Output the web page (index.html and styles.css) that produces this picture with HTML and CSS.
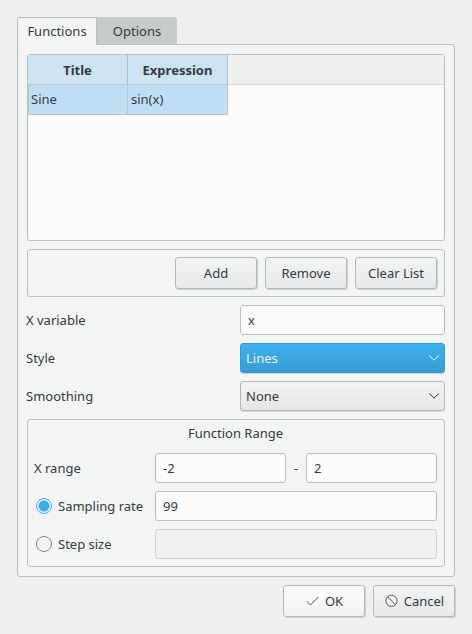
FILE: index.html
```html
<!DOCTYPE html>
<html lang="en">
<head>
<meta charset="utf-8">
<meta name="viewport" content="width=device-width, initial-scale=1">
<title>Functions</title>
<link rel="stylesheet" href="styles.css">
</head>
<body>
<form class="dialog">
  <div class="tabs" role="tablist">
    <button class="tab tab-active" type="button" role="tab" aria-selected="true" aria-controls="functions">Functions</button>
    <button class="tab" type="button" role="tab" aria-selected="false">Options</button>
  </div>
  <section class="panel" id="functions" role="tabpanel">
    <div class="list">
      <table class="table">
        <thead>
          <tr><th scope="col">Title</th><th scope="col">Expression</th><th class="rest" aria-hidden="true"></th></tr>
        </thead>
        <tbody>
          <tr><td>Sine</td><td>sin(x)</td></tr>
        </tbody>
      </table>
    </div>
    <div class="group actions">
      <button class="button" type="button">Add</button>
      <button class="button" type="button">Remove</button>
      <button class="button" type="button">Clear List</button>
    </div>
    <div class="row">
      <label for="variable">X variable</label>
      <input class="field" id="variable" type="text" value="x">
    </div>
    <div class="row">
      <label for="style">Style</label>
      <div class="combo combo-active">
        <select id="style"><option>Lines</option></select>
        <svg class="arrow" viewBox="0 0 12 8" aria-hidden="true"><path d="M1.200 1.500 6 6.200l4.800-4.700"/></svg>
      </div>
    </div>
    <div class="row">
      <label for="smoothing">Smoothing</label>
      <div class="combo">
        <select id="smoothing"><option>None</option></select>
        <svg class="arrow" viewBox="0 0 12 8" aria-hidden="true"><path d="M1.200 1.500 6 6.200l4.800-4.700"/></svg>
      </div>
    </div>
    <fieldset class="group range" aria-labelledby="range-title">
      <div class="range-title" id="range-title">Function Range</div>
      <div class="range-row">
        <label for="from">X range</label>
        <div class="pair">
          <input class="field" id="from" type="text" value="-2">
          <span>-</span>
          <input class="field" type="text" value="2" aria-label="X range end">
        </div>
      </div>
      <div class="range-row">
        <label class="choice"><input class="radio" type="radio" name="mode" checked>Sampling rate</label>
        <input class="field" type="text" value="99" aria-label="Sampling rate">
      </div>
      <div class="range-row">
        <label class="choice"><input class="radio" type="radio" name="mode">Step size</label>
        <input class="field" type="text" aria-label="Step size" disabled>
      </div>
    </fieldset>
  </section>
  <footer class="footer">
    <button class="button button-light" type="button">
      <svg class="icon" viewBox="0 0 16 16" aria-hidden="true"><path d="M1.800 8.300 5.500 12l7.700-8"/></svg>OK
    </button>
    <button class="button" type="button">
      <svg class="icon" viewBox="0 0 16 16" aria-hidden="true"><circle cx="7.500" cy="7.800" r="5.600"/><path d="m3.500 3.800 8 8"/></svg>Cancel
    </button>
  </footer>
</form>
</body>
</html>
```

FILE: styles.css
```css
* {
  box-sizing: border-box;
}

body {
  margin: 0;
  background: #eef0ef;
  color: #353a3f;
  font: 13px/18px "Noto Sans", sans-serif;
}

button,
input,
select {
  margin: 0;
  color: inherit;
  font: inherit;
}

.dialog {
  padding: 17px;
}

.tabs {
  display: flex;
  position: relative;
  margin-bottom: -1px;
}

.tab {
  width: 80px;
  height: 27px;
  padding: 0;
  border: 1px solid #c7cbca;
  border-bottom: 0;
  border-radius: 0 3px 0 0;
  background: #c7cbca;
}

.tab-active {
  height: 28px;
  padding-bottom: 2px;
  border-color: #bbbebe;
  border-radius: 3px 0 0 0;
  background: #f3f5f4;
}

.panel {
  display: flex;
  flex-direction: column;
  gap: 8px;
  padding: 9px;
  border: 1px solid #bbbebe;
  border-radius: 0 3px 3px 3px;
  background: #f3f5f4;
}

.list {
  height: 187px;
  overflow: hidden;
  border: 1px solid #bbbebe;
  border-radius: 3px;
  background: #fcfcfc;
}

.table {
  width: 100%;
  border-collapse: separate;
  border-spacing: 0;
  table-layout: fixed;
}

.table th {
  width: 100px;
  height: 30px;
  padding: 0;
  border-right: 1px solid #a9bfcb;
  border-bottom: 1px solid #bfc9cd;
  background: #cce3f1;
}

.table .rest {
  width: auto;
  border-right: 0;
  border-bottom-color: #d8dbda;
  background: #eef0ef;
}

.table td {
  height: 30px;
  padding: 0 3px 2px;
  border-right: 1px solid #bbc6cc;
  border-bottom: 1px solid #bbc6cc;
  background: #c1dff4;
}

.table td:first-child {
  padding-left: 2px;
  border-left: 1px solid #bbc6cc;
}

.group {
  min-width: 0;
  margin: 0;
  border: 1px solid #bbbebe;
  border-radius: 3px;
}

.actions {
  display: flex;
  justify-content: flex-end;
  gap: 8px;
  padding: 7px;
}

.button {
  display: flex;
  align-items: center;
  justify-content: center;
  gap: 4px;
  width: 82px;
  height: 32px;
  padding: 0;
  border: 1px solid #b5b8ba;
  border-radius: 3px;
  background: linear-gradient(#f2f3f3, #e7e8e9);
  box-shadow: 1px 1px 0 #ccd0d0;
}

.button-light {
  background: linear-gradient(#fcfcfc, #f1f2f2);
}

.row {
  display: grid;
  grid-template-columns: 213fr 205fr;
  align-items: center;
}

.row > label {
  margin-left: -1px;
}

.field {
  width: 100%;
  min-width: 0;
  height: 30px;
  padding: 0 7px;
  border: 1px solid #bbbebe;
  border-radius: 3px;
  background: #fcfcfc;
}

.field:disabled {
  border-color: #d1d4d5;
  background: #f0f0f0;
}

.combo {
  position: relative;
}

.combo select {
  display: block;
  appearance: none;
  width: 100%;
  height: 30px;
  padding: 0 24px 0 5px;
  border: 1px solid #b5b8ba;
  border-radius: 3px;
  background: linear-gradient(#f2f3f3, #e5e6e6);
  box-shadow: 0 1px 0 #d5d8d8;
}

.combo-active select {
  border-color: #3498d2;
  background: linear-gradient(#3fb2f0, #389bd4);
  color: #eff3f5;
}

.arrow {
  position: absolute;
  top: 11px;
  right: 5px;
  width: 12px;
  height: 8px;
  fill: none;
  stroke: #31363b;
  pointer-events: none;
}

.combo-active .arrow {
  stroke: #fcfcfc;
}

.range {
  display: flex;
  flex-direction: column;
  gap: 8px;
  padding: 4px 7px 7px 6px;
}

.range-title {
  padding-bottom: 3px;
  text-align: center;
}

.range-row {
  display: grid;
  grid-template-columns: 121px 1fr;
  align-items: center;
}

.pair {
  display: grid;
  grid-template-columns: 1fr 20px 1fr;
  align-items: center;
  text-align: center;
}

.choice {
  display: flex;
  align-items: center;
  gap: 6px;
  padding-left: 2px;
}

.radio {
  appearance: none;
  width: 16px;
  height: 16px;
  border: 1px solid #7f8386;
  border-radius: 50%;
}

.radio:checked {
  border-color: #3daee9;
  background: radial-gradient(circle, #3daee9 5px, transparent 6px);
}

.footer {
  display: flex;
  justify-content: flex-end;
  gap: 8px;
  margin-top: 8px;
}

.icon {
  width: 16px;
  height: 16px;
  fill: none;
  stroke: #4d5257;
}
```
